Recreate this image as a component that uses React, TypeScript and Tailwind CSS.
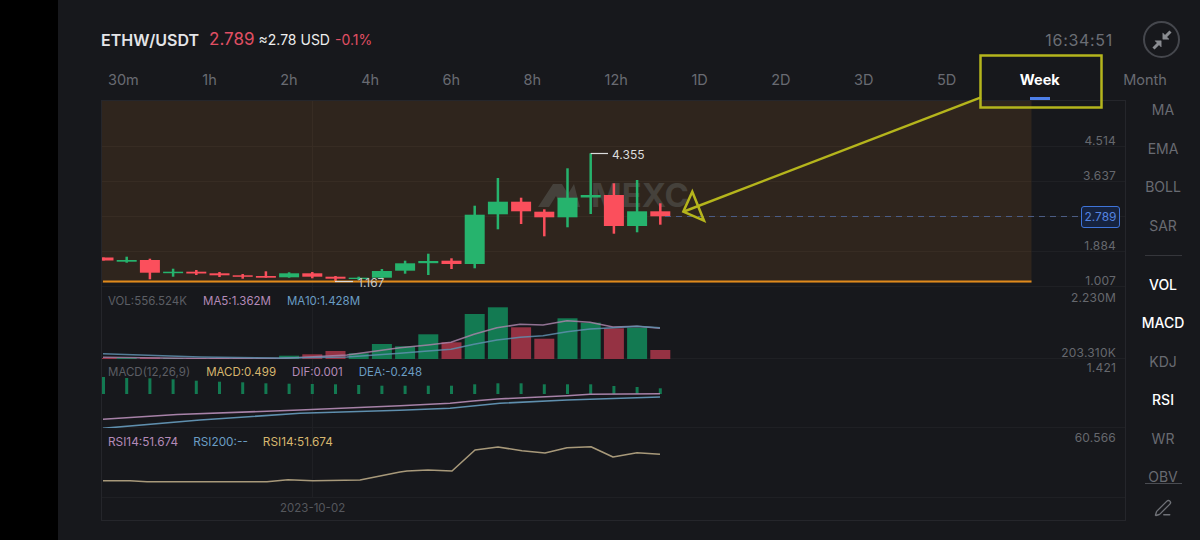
import React from "react";
import { PenLine } from "lucide-react";

const tabs = ["30m", "1h", "2h", "4h", "6h", "8h", "12h", "1D", "2D", "3D", "5D", "Week", "Month"];
const overlays = ["MA", "EMA", "BOLL", "SAR"];
const indicators = [
  { name: "VOL", active: true },
  { name: "MACD", active: true },
  { name: "KDJ", active: false },
  { name: "RSI", active: true },
  { name: "WR", active: false },
];

const GREEN = "#26b36d";
const RED = "#fb4f5c";
const VOL_GREEN = "#137a52";
const VOL_RED = "#953243";
const AXIS = "#66686e";
const GRID = "#1f2024";

const step = 23.2;
const cx = (i: number) => 103.5 + step * i;

// up, body top, body bottom, high, low
const candles: [boolean, number, number, number, number][] = [
  [false, 257.5, 260.5, 257.5, 260.5],
  [true, 260, 261.7, 256.7, 262.7],
  [false, 260, 272.7, 258.7, 279.3],
  [true, 271.7, 273.2, 268.7, 276.7],
  [false, 271.7, 273.5, 270, 275],
  [false, 273.3, 275.3, 272, 277],
  [false, 275.3, 276.8, 274, 278.7],
  [false, 276, 277.7, 271.3, 277.7],
  [true, 273.3, 277.3, 272.3, 277.7],
  [false, 273.3, 276.7, 272, 278.3],
  [false, 276.7, 278.7, 276, 281.7],
  [true, 277.7, 279, 276.7, 280],
  [true, 271, 277.7, 269, 278.3],
  [true, 263.3, 270.7, 260.7, 273.7],
  [true, 261, 263.2, 253.7, 275],
  [false, 260.7, 264, 258.3, 269],
  [true, 214.7, 264, 205.7, 268.3],
  [true, 201.7, 214.3, 178, 229.3],
  [false, 201.7, 211.3, 197.7, 224],
  [false, 211.7, 217.3, 209.3, 236.3],
  [true, 197.7, 217.3, 168.3, 227.3],
  [true, 195, 197.5, 153.3, 214],
  [false, 195, 226, 183.3, 233.7],
  [true, 211.3, 226, 180, 232.3],
  [false, 211.3, 216.3, 203.3, 224.7],
];

const volTops = [358, 358, 357.5, 358, 358, 358, 358, 358, 355.7, 354.3, 351, 353.3, 344, 346.3, 334.3, 342.3, 314, 307.3, 327.3, 338.7, 318.3, 322.7, 328.3, 327.7, 350];
const macdTops = [377, 378, 378.3, 379.3, 380.7, 381.7, 382.3, 383.3, 383.7, 384, 384.3, 385, 385.7, 385.7, 385.7, 385.7, 384.3, 383.3, 383.3, 384.3, 384.3, 384.3, 386, 387, 388.3];

const ma5 = "103,357.3 200,358.5 280,358.5 347,355 400,347.7 428,345 451,342.3 474,334.3 497,327.7 520,324.3 543,325 567,320.7 590,322.3 613,327 637,326.3 660,328.3";
const ma10 = "103,353.7 200,357 280,358 347,357 400,353.3 428,351 451,349.3 474,344.3 497,340 520,337.3 543,335.7 567,331.7 590,329 613,327.7 637,326.3 660,327.7";
const dif = "103,419.3 177,414.5 300,410 400,405.7 450,403.3 473,401 497,399 567,395.7 590,394.3 660,393.7";
const dea = "103,428.3 200,420 300,413.3 400,410.3 450,408.3 500,403.3 567,400 660,397";
const rsi = "103,480.7 130,480.7 147,481.7 267,481.7 288,479.7 313,480.7 360,480 400,472 407,471 428,470 452,471 475,450 498,447 522,450.7 545,453 567,447.7 591,446.7 613,457 637,452.7 660,454.3";

function Tick({ y, label }: { y: number; label: string }) {
  return (
    <text x={1116} y={y} textAnchor="end" fontSize={12} letterSpacing={0.2} fill={AXIS} dominantBaseline="central">
      {label}
    </text>
  );
}

function Grid({ ys, y1, y2, stroke = GRID }: { ys: number[]; y1: number; y2: number; stroke?: string }) {
  return (
    <>
      {ys.map((y) => (
        <line key={y} x1={102} x2={1125} y1={y + 0.5} y2={y + 0.5} stroke={stroke} />
      ))}
      <line x1={312.5} x2={312.5} y1={y1} y2={y2} stroke={stroke} />
    </>
  );
}

function MainPane() {
  return (
    <div className="relative h-[186px]">
      <svg className="absolute inset-0 h-full w-full overflow-visible" viewBox="102 101 1023 186">
        <Grid ys={[146, 181, 216, 251, 286]} y1={101} y2={287} />
        <rect x={102} y={101} width={929.5} height={182} fill="#2f251d" />
        <line x1={102} x2={1031} y1={146.5} y2={146.5} stroke="#372c23" />
        <line x1={102} x2={1031} y1={181.5} y2={181.5} stroke="#372c23" />
        <line x1={102} x2={1031} y1={216.5} y2={216.5} stroke="#372c23" />
        <line x1={102} x2={1031} y1={251.5} y2={251.5} stroke="#372c23" />
        <line x1={312.5} x2={312.5} y1={101} y2={283} stroke="#372c23" />

        {/* watermark */}
        <path d="M538 207 L553 184 H562 L568 194 L574 184 L580 207 H571 L567 199 L562 207 L556 196 L549 207 Z" fill="#45413b" />
        <text x={591} y={207} fontSize={33} fontWeight={700} fill="#45413b">
          MEXC
        </text>

        {candles.map(([up, top, bottom, high, low], i) => {
          const color = up ? GREEN : RED;
          // the first candle is cut by the left edge of the chart
          const left = Math.max(102, cx(i) - 10);
          return (
            <g key={i} fill={color}>
              <rect x={cx(i) - 1.25} y={high} width={2.5} height={low - high} />
              <rect x={left} y={top} width={cx(i) + 10 - left} height={bottom - top} />
            </g>
          );
        })}

        <line x1={665} x2={1081} y1={216.5} y2={216.5} stroke="#4b5c84" strokeWidth={1} strokeDasharray="6 5" />
        <rect x={103} y={280.5} width={928.5} height={2} fill="#e08a1c" />

        <line x1={590.7} x2={608} y1={153.5} y2={153.5} stroke="#dcdcdc" strokeWidth={1.2} />
        <text x={612} y={154} fontSize={12} fill="#dcdcdc" dominantBaseline="central">
          4.355
        </text>
        <line x1={335} x2={353} y1={281.5} y2={281.5} stroke="#dcdcdc" strokeWidth={1.2} />
        <text x={358} y={282} fontSize={12} fill="#c9c8c4" dominantBaseline="central">
          1.167
        </text>

        <Tick y={140} label="4.514" />
        <Tick y={175.5} label="3.637" />
        <Tick y={245.5} label="1.884" />
        <Tick y={280} label="1.007" />
      </svg>
      <div className="absolute left-[979px] top-[105px] flex h-[22px] w-[39px] items-center justify-center rounded-[3px] border-[1.5px] border-[#3f74d9] bg-[#16233f] text-xs text-[#5585e0]">
        2.789
      </div>
    </div>
  );
}

function VolPane() {
  return (
    <div className="relative h-[72px]">
      <svg className="absolute inset-0 h-full w-full" viewBox="102 287 1023 72">
        <Grid ys={[358]} y1={287} y2={359} />
        {volTops.map((top, i) => (
          <rect key={i} x={Math.max(102, cx(i) - 10)} y={top} width={20} height={359 - top} fill={candles[i][0] ? VOL_GREEN : VOL_RED} />
        ))}
        <polyline points={ma5} fill="none" stroke="#a782a8" strokeWidth={1.6} strokeLinejoin="round" opacity={0.85} />
        <polyline points={ma10} fill="none" stroke="#5f8fae" strokeWidth={1.6} strokeLinejoin="round" opacity={0.85} />
        <Tick y={297} label="2.230M" />
        <Tick y={352} label="203.310K" />
      </svg>
      <div className="relative flex gap-4 pl-[6px] pt-[6px] text-[11.5px] leading-4">
        <span className="text-[#5c5e64]">VOL:556.524K</span>
        <span className="text-[#b48ab8]">MA5:1.362M</span>
        <span className="text-[#6a9dc4]">MA10:1.428M</span>
      </div>
    </div>
  );
}

function MacdPane() {
  return (
    <div className="relative h-[69px]">
      <svg className="absolute inset-0 h-full w-full" viewBox="102 359 1023 69">
        <Grid ys={[427]} y1={359} y2={428} />
        {macdTops.map((top, i) => (
          <rect key={i} x={cx(i) - 1.5} y={top} width={3} height={394 - top} fill={VOL_GREEN} />
        ))}
        <polyline points={dif} fill="none" stroke="#a782a8" strokeWidth={1.6} />
        <polyline points={dea} fill="none" stroke="#5f8fae" strokeWidth={1.6} />
        <Tick y={367} label="1.421" />
      </svg>
      <div className="relative flex gap-4 pl-[6px] pt-[5px] text-[11.5px] leading-4">
        <span className="text-[#5c5e64]">MACD(12,26,9)</span>
        <span className="text-[#d6b66e]">MACD:0.499</span>
        <span className="text-[#b48ab8]">DIF:0.001</span>
        <span className="text-[#6a9dc4]">DEA:-0.248</span>
      </div>
    </div>
  );
}

function RsiPane() {
  return (
    <div className="relative h-[70px]">
      <svg className="absolute inset-0 h-full w-full" viewBox="102 428 1023 70">
        <Grid ys={[497]} y1={428} y2={498} />
        <polyline points={rsi} fill="none" stroke="#a8997a" strokeWidth={1.6} strokeLinejoin="round" />
        <Tick y={437} label="60.566" />
      </svg>
      <div className="relative flex gap-[15px] pl-[6px] pt-[6px] text-[11.8px] leading-4">
        <span className="text-[#b48ab8]">RSI14:51.674</span>
        <span className="text-[#6a9dc4]">RSI200:--</span>
        <span className="text-[#d6b66e]">RSI14:51.674</span>
      </div>
    </div>
  );
}

function CollapseIcon() {
  return (
    <svg width="20" height="20" viewBox="0 0 20 20" fill="#8b8d92" stroke="#8b8d92">
      <path d="M10.8 9.2 V3 L17 9.2 Z" strokeWidth={0.5} />
      <path d="M13 7 L18.5 1.5" strokeWidth={3} />
      <path d="M9.2 10.8 V17 L3 10.8 Z" strokeWidth={0.5} />
      <path d="M7 13 L1.5 18.5" strokeWidth={3} />
    </svg>
  );
}

export default function App() {
  return (
    <div className="relative flex h-[540px] w-[1200px] overflow-hidden bg-black font-['Inter',sans-serif]">
      <div className="w-[58px] shrink-0" />
      <div className="flex min-w-0 flex-1 flex-col bg-[#17181c]">
        <div className="mt-[21px] flex h-[37px] items-center pl-[43px] pr-5">
          <span className="text-base font-semibold text-[#e4e5e8]">ETHW/USDT</span>
          <span className="ml-[10px] text-[17px] text-[#e04f63]">2.789</span>
          <span className="ml-1 text-sm text-[#eeeeee]">≈2.78 USD</span>
          <span className="ml-[5px] text-sm text-[#e04f63]">-0.1%</span>
          <span className="ml-auto mr-[30px] text-base tracking-[0.7px] text-[#6b6e75]">16:34:51</span>
          <div className="flex h-[37px] w-[37px] items-center justify-center rounded-full border-2 border-[#45474d]">
            <CollapseIcon />
          </div>
        </div>

        <div className="flex h-[42px] items-center justify-between pl-[50px] pr-[33px] pt-[2px] text-[14.5px] text-[#696b72]">
          {tabs.map((tab) =>
            tab === "Week" ? (
              <span key={tab} className="relative font-bold text-white">
                {tab}
                <span className="absolute left-1/2 top-[28px] h-[3px] w-5 -translate-x-1/2 bg-[#4d7fe8]" />
              </span>
            ) : (
              <span key={tab}>{tab}</span>
            )
          )}
        </div>

        <div className="flex">
          <div className="ml-[43px] h-[421px] w-[1025px] shrink-0 border border-[#25262b]">
            <MainPane />
            <VolPane />
            <MacdPane />
            <RsiPane />
            <div className="flex h-[21px] items-center pl-[178px] text-[11.5px] text-[#55575c]">2023-10-02</div>
          </div>

          <div className="flex flex-1 flex-col items-center text-sm text-[#696b72]">
            <div className="flex flex-col items-center gap-[18.5px]">
              {overlays.map((name) => (
                <span key={name} className="h-5 leading-5">
                  {name}
                </span>
              ))}
            </div>
            <div className="mb-[19px] mt-[19px] h-px w-[37px] bg-[#35363b]" />
            <div className="flex flex-col items-center gap-[18.5px]">
              {indicators.map((item) => (
                <span key={item.name} className={item.active ? "h-5 font-medium leading-5 text-white" : "h-5 leading-5"}>
                  {item.name}
                </span>
              ))}
            </div>
            <span className="mt-[18.5px] h-[17px] w-[37px] border-b border-[#4a4c52] text-center leading-5">OBV</span>
            <PenLine className="mt-[15px] h-[18px] w-[18px] text-[#6f7177]" strokeWidth={1.8} />
          </div>
        </div>
      </div>

      {/* hand drawn annotation on top of the screenshot */}
      <svg className="pointer-events-none absolute inset-0 h-[540px] w-[1200px]" viewBox="0 0 1200 540" fill="none" stroke="#b5b51c">
        <rect x={980.5} y={55.5} width={121} height={52} strokeWidth={2.5} />
        <line x1={981} y1={97.3} x2={684} y2={211.5} strokeWidth={2.5} />
        <polygon points="692.3,191.7 704,220.7 683.3,211.7" strokeWidth={2.5} />
      </svg>
    </div>
  );
}
